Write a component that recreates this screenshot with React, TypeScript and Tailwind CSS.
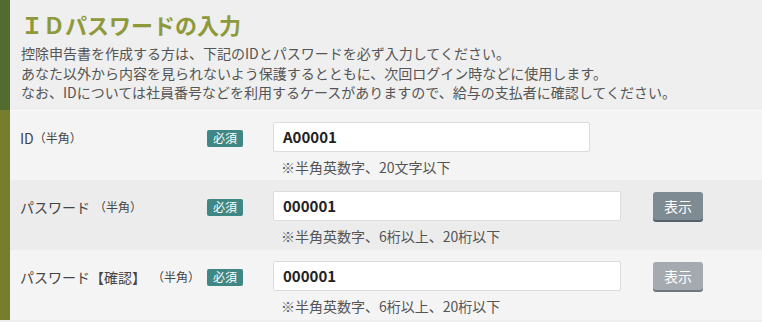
import React from "react";

const font = { fontFamily: '"Noto Sans CJK JP", "Noto Sans", sans-serif' };

function Badge() {
  return (
    <span className="inline-flex h-[17px] w-[36px] items-center justify-center rounded-[2px] bg-[#3f8784] text-[12px] leading-none text-white">
      必須
    </span>
  );
}

function Row({
  label,
  value,
  hint,
  bg,
  inputW,
  button,
}: {
  label: React.ReactNode;
  value: string;
  hint: string;
  bg: string;
  inputW: string;
  button?: "dark" | "light";
}) {
  return (
    <div className={`flex h-[70px] ${bg}`}>
      <div className="flex w-[263px] shrink-0 items-start pl-[10px] pt-[17px]">
        <div className="flex h-[20px] w-[187px] items-center text-[14px] text-[#444]">{label}</div>
        <div className="flex h-[20px] items-center">
          <Badge />
        </div>
      </div>
      <div className="flex flex-col pt-[11px]">
        <div className="flex items-center">
          <div
            className={`flex h-[30px] ${inputW} items-center rounded-[2px] border border-[#dcdcdc] bg-white pl-[9px] text-[15px] font-bold text-[#222]`}
          >
            {value}
          </div>
          {button && (
            <div
              className={`ml-[32px] flex h-[28px] w-[50px] items-center justify-center rounded-[3px] text-[14px] text-white ${
                button === "dark"
                  ? "bg-[#7e8b93] shadow-[0_2px_0_#56606a]"
                  : "bg-[#a4aaaf] shadow-[0_2px_0_#6f777e]"
              }`}
            >
              表示
            </div>
          )}
        </div>
        <div className="mt-[5px] pl-[8px] text-[14px] leading-[20px] text-[#555]">{hint}</div>
      </div>
    </div>
  );
}

export default function App() {
  return (
    <div className="h-[322px] w-[762px] overflow-hidden bg-[#eeeeed]" style={font}>
      <div className="h-[110px] border-l-[10px] border-[#526b2e] bg-[#eeefee] pl-[11px]">
        <h1 className="pt-[9px] text-[22px] font-bold leading-[30px] text-[#8e9a3a]">ＩＤパスワードの入力</h1>
        <div className="mt-[5px] text-[14px] leading-[19.5px] text-[#555]">
          <p>控除申告書を作成する方は、下記のIDとパスワードを必ず入力してください。</p>
          <p>あなた以外から内容を見られないよう保護するとともに、次回ログイン時などに使用します。</p>
          <p>なお、IDについては社員番号などを利用するケースがありますので、給与の支払者に確認してください。</p>
        </div>
      </div>
      <div className="border-l-[10px] border-[#767d2c]">
        <Row
          bg="bg-[#f4f4f4] border-t border-[#fafafa]"
          label={
            <>
              ID<span className="text-[12px]">（半角）</span>
            </>
          }
          value="A00001"
          hint="※半角英数字、20文字以下"
          inputW="w-[317px]"
        />
        <Row
          bg="bg-[#ececec]"
          label={
            <>
              パスワード<span className="ml-[4px] text-[12px]">（半角）</span>
            </>
          }
          value="000001"
          hint="※半角英数字、6桁以上、20桁以下"
          inputW="w-[348px]"
          button="dark"
        />
        <Row
          bg="bg-[#f4f4f4]"
          label={
            <>
              パスワード【確認】<span className="ml-[6px] text-[12px]">（半角）</span>
            </>
          }
          value="000001"
          hint="※半角英数字、6桁以上、20桁以下"
          inputW="w-[348px]"
          button="light"
        />
      </div>
    </div>
  );
}
